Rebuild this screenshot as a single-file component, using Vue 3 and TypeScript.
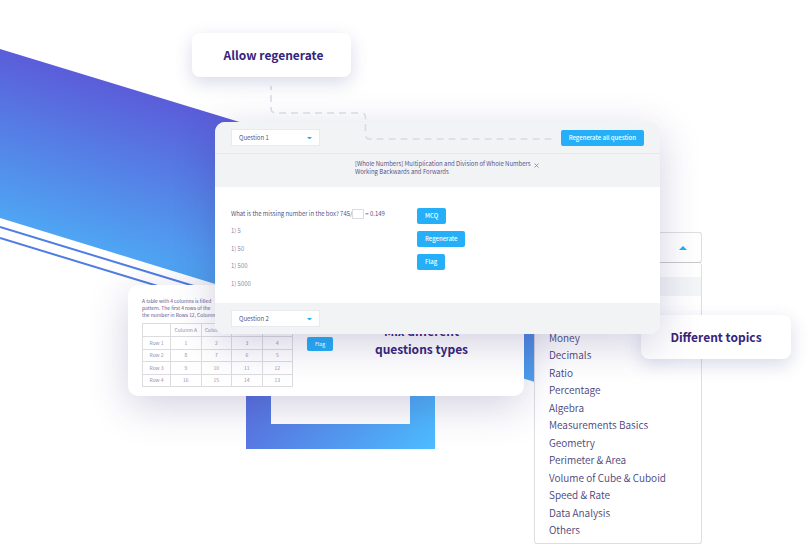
<script setup lang="ts">
import { ref } from 'vue'

const topics: string[] = [
  'Money',
  'Decimals',
  'Ratio',
  'Percentage',
  'Algebra',
  'Measurements Basics',
  'Geometry',
  'Perimeter & Area',
  'Volume of Cube & Cuboid',
  'Speed & Rate',
  'Data Analysis',
  'Others',
]
const answers: string[] = ['1) 5', '1) 50', '1) 500', '1) 5000']
const actions: string[] = ['MCQ', 'Regenerate', 'Flag']
const promptLines: string[] = [
  'A table with 4 columns is filled',
  'pattern. The first 4 rows of the',
  'the number in Rows 12, Column',
]
const columns: string[] = ['Column A', 'Column B', 'Column C', 'Column D']
const rows: { name: string; cells: number[] }[] = [
  { name: 'Row 1', cells: [1, 2, 3, 4] },
  { name: 'Row 2', cells: [8, 7, 6, 5] },
  { name: 'Row 3', cells: [9, 10, 11, 12] },
  { name: 'Row 4', cells: [16, 15, 14, 13] },
]
const missing = ref('')
</script>

<template>
  <main class="stage">
    <svg class="backdrop" width="811" height="546" viewBox="0 0 811 546" aria-hidden="true">
      <defs>
        <linearGradient id="band" gradientUnits="userSpaceOnUse" x1="0" y1="49" x2="-47" y2="203">
          <stop offset="0" stop-color="#5b5dd9" />
          <stop offset="1" stop-color="#4fa5f3" />
        </linearGradient>
        <linearGradient id="frame" gradientUnits="userSpaceOnUse" x1="246" y1="360" x2="435" y2="449">
          <stop offset="0" stop-color="#5b6bdd" />
          <stop offset="1" stop-color="#4dbdff" />
        </linearGradient>
      </defs>
      <path d="M0 49 L600 232 V402 L0 218 Z" fill="url(#band)" />
      <path d="M0 227 L230 297 M0 238 L230 308" stroke="#4f7de4" stroke-width="2" fill="none" />
      <path d="M258.500 260 H422.500 V436.500 H258.500 Z" fill="none" stroke="url(#frame)" stroke-width="25" />
    </svg>

    <section class="topics">
      <button class="topics-toggle" type="button" aria-label="Topics" aria-expanded="true">
        <svg width="8" height="4" viewBox="0 0 8 4" aria-hidden="true"><path d="M0 4 L4 0 L8 4 Z" fill="#22aef5" /></svg>
      </button>
      <div class="topics-menu">
        <div class="topics-active"></div>
        <ul>
          <li v-for="t in topics" :key="t">{{ t }}</li>
        </ul>
      </div>
    </section>

    <h2 class="tag tag-topics">Different topics</h2>

    <section class="mix">
      <div class="mix-question">
        <p><template v-for="line in promptLines" :key="line">{{ line }}<br /></template></p>
        <div class="mix-row">
          <table>
            <thead>
              <tr>
                <th class="corner"></th>
                <th v-for="c in columns" :key="c" scope="col">{{ c }}</th>
              </tr>
            </thead>
            <tbody>
              <tr v-for="r in rows" :key="r.name">
                <th scope="row">{{ r.name }}</th>
                <td v-for="n in r.cells" :key="n">{{ n }}</td>
              </tr>
            </tbody>
          </table>
          <button class="btn btn-small" type="button">Flag</button>
        </div>
      </div>
      <h2>Mix different<br />questions types</h2>
    </section>

    <section class="editor">
      <header class="bar">
        <div class="picker">
          <select aria-label="First question"><option>Question 1</option></select>
          <svg width="5" height="2" viewBox="0 0 5 2" aria-hidden="true"><path d="M0 0 H5 L3 2 H2 Z" fill="#22aef5" /></svg>
        </div>
        <button class="btn" type="button">Regenerate all question</button>
      </header>
      <div class="subject">
        <p>[Whole Numbers] Multiplication and Division of Whole Numbers<br />Working Backwards and Forwards</p>
        <button class="close" type="button" aria-label="Remove">
          <svg width="5" height="5" viewBox="0 0 5 5" aria-hidden="true"><path d="M0.500 0.500 L4.500 4.500 M4.500 0.500 L0.500 4.500" stroke="#77749a" stroke-width="0.700" /></svg>
        </button>
      </div>
      <div class="body">
        <div class="question">
          <label class="ask">What is the missing number in the box? 745/<input v-model="missing" type="text" />= 0.149</label>
          <ul class="answers">
            <li v-for="a in answers" :key="a">{{ a }}</li>
          </ul>
        </div>
        <div class="actions">
          <button v-for="a in actions" :key="a" class="btn" type="button">{{ a }}</button>
        </div>
      </div>
      <footer class="bar bar-next">
        <div class="picker">
          <select aria-label="Second question"><option>Question 2</option></select>
          <svg width="5" height="2" viewBox="0 0 5 2" aria-hidden="true"><path d="M0 0 H5 L3 2 H2 Z" fill="#22aef5" /></svg>
        </div>
      </footer>
    </section>

    <svg class="connector" width="285" height="56" viewBox="0 0 285 56" aria-hidden="true">
      <path d="M1 0 V22 Q1 27 6 27 H91 Q95.500 27 95.500 31 V49 Q95.500 53 100 53 H284" fill="none" stroke="#d9d9e5" stroke-width="1.500" stroke-dasharray="7 5" stroke-dashoffset="3" />
    </svg>
    <h2 class="tag tag-regenerate">Allow regenerate</h2>
  </main>
</template>

<style>
body {
  margin: 0;
  background: #fff;
}
</style>

<style scoped>
.stage {
  position: relative;
  min-height: 546px;
  overflow: hidden;
  background: #fff;
  color: #49447a;
  font-family: "Noto Sans CJK SC DemiLight", "Noto Sans CJK SC", "Noto Sans", sans-serif;
  font-size: 6px;
  font-weight: 350;
  line-height: 8px;
}
.stage * {
  box-sizing: border-box;
}
button,
select,
input {
  font: inherit;
  color: inherit;
  border: 0;
  margin: 0;
  padding: 0;
  background: none;
}
h2,
p,
ul {
  margin: 0;
  padding: 0;
  list-style: none;
}
svg {
  display: block;
}
h2 {
  color: #35247b;
  font-family: "Noto Sans CJK SC", "Noto Sans", sans-serif;
  font-size: 12px;
  line-height: 18px;
  font-weight: 700;
  text-align: center;
}
.backdrop {
  position: absolute;
  left: 0;
  top: 0;
}
.tag {
  position: absolute;
  display: flex;
  align-items: center;
  justify-content: center;
  height: 44px;
  border-radius: 8px;
  background: #fff;
  box-shadow: 0 6px 18px rgba(60, 70, 150, 0.2);
}
.tag-regenerate {
  left: 192px;
  top: 33px;
  width: 159px;
  padding-left: 4px;
}
.tag-topics {
  left: 641px;
  top: 315px;
  width: 150px;
}
.topics {
  position: absolute;
  left: 534px;
  top: 232px;
  bottom: 2px;
  width: 168px;
  display: flex;
  flex-direction: column;
}
.topics-toggle {
  display: flex;
  flex: none;
  align-items: center;
  justify-content: flex-end;
  height: 31px;
  padding-right: 14px;
  border: 1px solid #dedee2;
  border-bottom-color: #c8c8ce;
  border-radius: 3px;
  background: #fff;
}
.topics-menu {
  flex: 1;
  display: flex;
  flex-direction: column;
  padding: 14px 0 4px;
  border: 1px solid #dedee2;
  border-top: 0;
  border-radius: 3px;
  background: #fff;
}
.topics-active {
  height: 19px;
  margin-bottom: 33px;
  background: #f3f5f7;
}
.topics-menu ul {
  flex: 1;
  display: grid;
  grid-auto-rows: 1fr;
  align-items: center;
  padding-left: 14px;
  font-size: 10px;
  line-height: 16px;
}
.mix {
  position: absolute;
  left: 128px;
  top: 285px;
  width: 396px;
  display: flex;
  padding: 12px 14px 9px;
  border-radius: 10px;
  background: #fff;
  box-shadow: 0 10px 40px rgba(55, 40, 120, 0.22);
}
.mix-question {
  width: 191px;
}
.mix p {
  line-height: 7px;
  font-size: 5px;
  font-weight: 400;
  white-space: nowrap;
}
.mix-row {
  display: flex;
  gap: 14px;
  margin-top: 5px;
}
.mix h2 {
  flex: 1;
  padding: 25px 0 0;
}
table {
  width: 151px;
  height: 64px;
  flex: none;
  table-layout: fixed;
  border-collapse: collapse;
  font-size: 5px;
  line-height: 6px;
  color: #8683a3;
}
th,
td {
  height: 12px;
  padding: 0;
  border: 1px solid #dcdce0;
  text-align: center;
  font-weight: 350;
}
.corner {
  width: 28px;
}
thead th {
  height: 13px;
}
.btn {
  height: 16px;
  padding: 0 8px;
  border-radius: 2px;
  background: #24aff8;
  color: #fff;
  font-family: "Noto Sans CJK SC", "Noto Sans", sans-serif;
  font-weight: 500;
  white-space: nowrap;
}
.btn-small {
  height: 14px;
  margin-top: 14px;
  font-size: 5px;
}
.editor {
  position: absolute;
  left: 215px;
  top: 122px;
  width: 445px;
  border-radius: 10px;
  background: #fff;
  box-shadow: 0 10px 40px rgba(55, 40, 120, 0.22);
}
.bar {
  display: flex;
  align-items: center;
  justify-content: space-between;
  height: 31px;
  padding: 0 16px;
  border-radius: 10px 10px 0 0;
  background: #f2f3f5;
}
.bar-next {
  border-radius: 0 0 10px 10px;
}
.picker {
  display: grid;
  align-items: center;
  width: 89px;
  height: 17px;
  border: 1px solid #e9eaed;
  background: #fff;
}
.picker select,
.picker svg {
  grid-area: 1 / 1;
}
.picker select {
  appearance: none;
  width: 100%;
  height: 15px;
  padding-left: 7px;
}
.picker svg {
  justify-self: end;
  margin-right: 7px;
  pointer-events: none;
}
.subject {
  display: flex;
  gap: 3px;
  height: 34px;
  padding: 6px 0 0 140px;
  border-top: 1px solid #e7e8eb;
  background: #f2f3f5;
}
.subject p {
  white-space: nowrap;
}
.close {
  height: 5px;
  margin-top: 3px;
}
.body {
  display: flex;
  height: 116px;
  padding: 21px 16px 0;
}
.question {
  width: 186px;
}
.ask {
  display: flex;
  align-items: center;
  height: 12px;
  white-space: nowrap;
}
.ask input {
  width: 12px;
  height: 10px;
  margin-right: 1px;
  border: 1px solid #dcdce0;
}
.answers {
  display: flex;
  flex-direction: column;
  justify-content: space-between;
  height: 61px;
  margin-top: 7px;
  color: #8683a3;
}
.actions {
  display: flex;
  flex-direction: column;
  align-items: flex-start;
  gap: 7px;
}
.connector {
  position: absolute;
  left: 270px;
  top: 86px;
}
</style>
